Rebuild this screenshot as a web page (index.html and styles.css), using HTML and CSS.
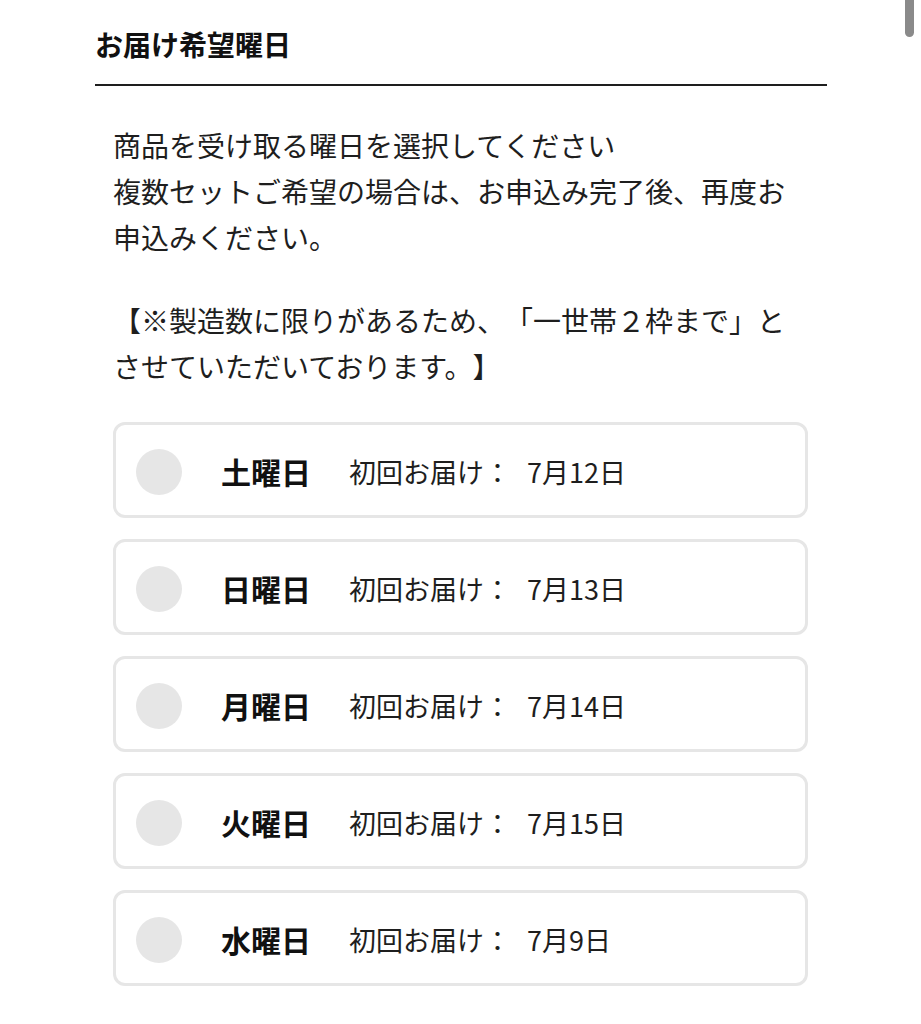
FILE: index.html
```html
<!DOCTYPE html>
<html lang="ja">
<head>
    <meta charset="UTF-8">
    <meta name="viewport" content="width=device-width, initial-scale=1.0">
    <title>お届け希望曜日</title>
    <link rel="stylesheet" href="styles.css">
</head>
<body>
    <div class="scroll-thumb"></div>

    <div class="container">
        <h2 class="section-title">お届け希望曜日</h2>

        <div class="section-body">
            <p class="lead">商品を受け取る曜日を選択してください<br>複数セットご希望の場合は、お申込み完了後、再度お申込みください。</p>
            <p class="note">【※製造数に限りがあるため、「一世帯２枠まで」とさせていただいております。】</p>

            <!-- delivery day options -->
            <div class="day-list">
                <label class="day-option">
                    <input type="radio" name="day" value="sat">
                    <span class="radio-mark"></span>
                    <span class="day-name">土曜日</span>
                    <span class="day-date">初回お届け：<span class="date-value">7月12日</span></span>
                </label>
                <label class="day-option">
                    <input type="radio" name="day" value="sun">
                    <span class="radio-mark"></span>
                    <span class="day-name">日曜日</span>
                    <span class="day-date">初回お届け：<span class="date-value">7月13日</span></span>
                </label>
                <label class="day-option">
                    <input type="radio" name="day" value="mon">
                    <span class="radio-mark"></span>
                    <span class="day-name">月曜日</span>
                    <span class="day-date">初回お届け：<span class="date-value">7月14日</span></span>
                </label>
                <label class="day-option">
                    <input type="radio" name="day" value="tue">
                    <span class="radio-mark"></span>
                    <span class="day-name">火曜日</span>
                    <span class="day-date">初回お届け：<span class="date-value">7月15日</span></span>
                </label>
                <label class="day-option">
                    <input type="radio" name="day" value="wed">
                    <span class="radio-mark"></span>
                    <span class="day-name">水曜日</span>
                    <span class="day-date">初回お届け：<span class="date-value">7月9日</span></span>
                </label>
            </div>
        </div>
    </div>
</body>
</html>
```

FILE: styles.css
```css
* {
    margin: 0;
    padding: 0;
    box-sizing: border-box;
}

body {
    background-color: #fff;
    color: #1e1e1e;
    font-family: "Noto Sans CJK JP", "Noto Sans", sans-serif;
    text-spacing-trim: space-all;
}

.scroll-thumb {
    position: fixed;
    top: 0;
    right: 7px;
    width: 9px;
    height: 37px;
    background-color: #8a8a8a;
    border-radius: 0 0 5px 5px;
}

.container {
    width: 733px;
    margin: 0 auto;
    padding-left: 1px;
}

.section-title {
    font-size: 28px;
    font-weight: bold;
    line-height: 40px;
    padding-top: 24px;
    padding-bottom: 20px;
    color: #111;
    border-bottom: 2px solid #1e1e1e;
}

.section-body {
    padding: 0 19px 0 18px;
}

.lead,
.note {
    font-size: 28px;
    line-height: 46px;
}

.lead {
    margin-top: 36px;
}

.note {
    margin-top: 37px;
}

.day-list {
    display: flex;
    flex-direction: column;
    gap: 21px;
    margin-top: 33px;
}

.day-option {
    display: flex;
    align-items: center;
    height: 96px;
    padding: 0 20px;
    border: 3px solid #e6e6e6;
    border-radius: 12px;
    cursor: pointer;
}

.day-option input[type="radio"] {
    display: none;
}

.radio-mark {
    width: 46px;
    height: 46px;
    margin-top: 3px;
    border-radius: 50%;
    background-color: #e6e6e6;
    flex-shrink: 0;
}

.day-option input[type="radio"]:checked + .radio-mark {
    background-color: #1e1e1e;
}

.day-name {
    margin-left: 39px;
    font-size: 30px;
    font-weight: bold;
    padding-top: 2px;
    color: #111;
}

.day-date {
    margin-left: 38px;
    font-size: 27px;
    padding-top: 3px;
}

.date-value {
    margin-left: 16px;
}
```
